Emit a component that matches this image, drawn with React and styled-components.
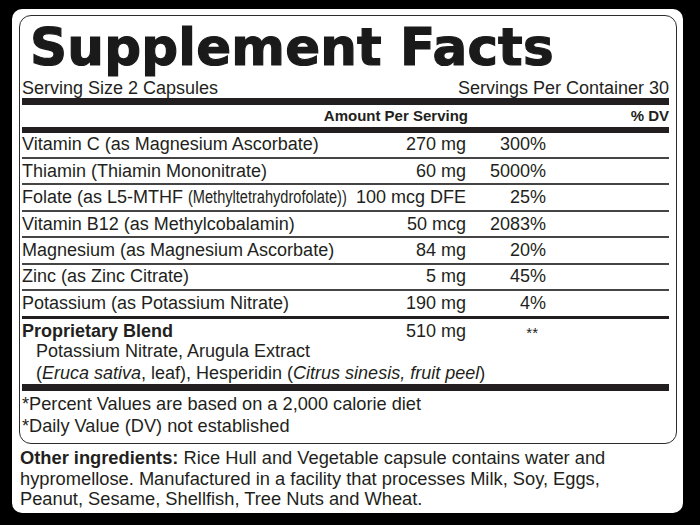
import React from "react";
import styled, { createGlobalStyle } from "styled-components";

const GlobalStyle = createGlobalStyle`
  html, body {
    margin: 0;
    padding: 0;
    background: #000;
  }
  body {
    font-family: "Liberation Sans", Arial, sans-serif;
    color: #231f20;
  }
`;

const Screen = styled.div`
  width: 700px;
  height: 525px;
  padding: 9px 17px 0 12px;
  box-sizing: border-box;
`;

const Card = styled.div`
  width: 671px;
  height: 504px;
  background: #fff;
  border-radius: 10px;
  padding: 6px 6px 0 7px;
  box-sizing: border-box;
`;

const Panel = styled.div`
  border: 1px solid #2b2b2b;
  border-radius: 12px;
  padding: 0 7px 6px 2px;
  height: 429px;
  box-sizing: border-box;
  display: flex;
  flex-direction: column;
`;

const Title = styled.h1`
  margin: 0;
  height: 62px;
  padding-left: 8px;
  font-family: "DejaVu Sans", "Liberation Sans", sans-serif;
  font-weight: bold;
  font-size: 51.5px;
  line-height: 62px;
  letter-spacing: 0.2px;
  color: #1a1a1a;
  -webkit-text-stroke: 1.2px #1a1a1a;
  white-space: nowrap;
`;

const ServingRow = styled.div`
  display: flex;
  justify-content: space-between;
  height: 20px;
  font-size: 18px;
  line-height: 20px;
`;

const ThickBar = styled.div`
  height: ${(p) => p.$h}px;
  background: #231f20;
  flex-shrink: 0;
`;

const Grid = styled.div`
  display: grid;
  grid-template-columns: 1fr 130px 80px 123px;
  align-items: center;
  white-space: nowrap;
`;

const HeaderRow = styled(Grid)`
  height: 22px;
  font-size: 15px;
  font-weight: bold;
`;

const HeaderCell = styled.div`
  grid-column: ${(p) => p.$span};
  text-align: right;
  margin-right: ${(p) => p.$pad || 0}px;
`;

const NutrientRow = styled(Grid)`
  height: 24.8px;
  font-size: 18px;
  border-bottom: ${(p) => (p.$last ? "3px solid #231f20" : "2px solid #454545")};
`;

const Name = styled.div`
  min-width: 0;
  overflow: visible;
  font-weight: ${(p) => (p.$bold ? "bold" : "normal")};
`;

const Narrow = styled.span`
  display: inline-block;
  transform: scaleX(0.81);
  transform-origin: left center;
`;

const Amount = styled.div`
  text-align: right;
`;

const Dv = styled.div`
  text-align: right;
`;

const Stars = styled(Dv)`
  font-size: 15px;
  padding-right: 8px;
  align-self: start;
  padding-top: 2px;
`;

const Blend = styled.div`
  padding-top: 1px;
  height: 66px;
  box-sizing: border-box;
  font-size: 18px;
  line-height: 21.5px;
`;

const BlendHead = styled(Grid)`
  height: 21.5px;
`;

const BlendLine = styled.div`
  padding-left: 14px;
  white-space: nowrap;
`;

const Notes = styled.div`
  font-size: 18.2px;
  line-height: 22px;
  padding-top: 2px;
`;

const Other = styled.p`
  margin: 4px 0 0 1px;
  font-size: 18.3px;
  line-height: 20.5px;
  white-space: nowrap;
`;

const nutrients = [
  ["Vitamin C (as Magnesium Ascorbate)", "270 mg", "300%"],
  ["Thiamin (Thiamin Mononitrate)", "60 mg", "5000%"],
  [
    <>
      Folate (as L5-MTHF <Narrow>(Methyltetrahydrofolate))</Narrow>
    </>,
    "100 mcg DFE",
    "25%",
  ],
  ["Vitamin B12 (as Methylcobalamin)", "50 mcg", "2083%"],
  ["Magnesium (as Magnesium Ascorbate)", "84 mg", "20%"],
  ["Zinc (as Zinc Citrate)", "5 mg", "45%"],
  ["Potassium (as Potassium Nitrate)", "190 mg", "4%"],
];

export default function App() {
  return (
    <>
      <GlobalStyle />
      <Screen>
        <Card>
          <Panel>
            <Title>Supplement Facts</Title>
            <ServingRow>
              <span>Serving Size 2 Capsules</span>
              <span>Servings Per Container 30</span>
            </ServingRow>
            <ThickBar $h={7} />
            <HeaderRow>
              <HeaderCell $span="1 / 3" $pad={-2}>
                Amount Per Serving
              </HeaderCell>
              <HeaderCell $span="3 / 5">% DV</HeaderCell>
            </HeaderRow>
            <ThickBar $h={6} />
            {nutrients.map(([name, amount, dv], i) => (
              <NutrientRow key={i} $last={i === nutrients.length - 1}>
                <Name>{name}</Name>
                <Amount>{amount}</Amount>
                <Dv>{dv}</Dv>
              </NutrientRow>
            ))}
            <Blend>
              <BlendHead>
                <Name $bold>Proprietary Blend</Name>
                <Amount>510 mg</Amount>
                <Stars>**</Stars>
              </BlendHead>
              <BlendLine>Potassium Nitrate, Arugula Extract</BlendLine>
              <BlendLine>
                (<i>Eruca sativa</i>, leaf), Hesperidin (
                <i>Citrus sinesis, fruit peel</i>)
              </BlendLine>
            </Blend>
            <ThickBar $h={7} />
            <Notes>
              <div>*Percent Values are based on a 2,000 calorie diet</div>
              <div>*Daily Value (DV) not established</div>
            </Notes>
          </Panel>
          <Other>
            <b>Other ingredients:</b> Rice Hull and Vegetable capsule contains
            water and
            <br />
            hypromellose. Manufactured in a facility that processes Milk, Soy,
            Eggs,
            <br />
            Peanut, Sesame, Shellfish, Tree Nuts and Wheat.
          </Other>
        </Card>
      </Screen>
    </>
  );
}
